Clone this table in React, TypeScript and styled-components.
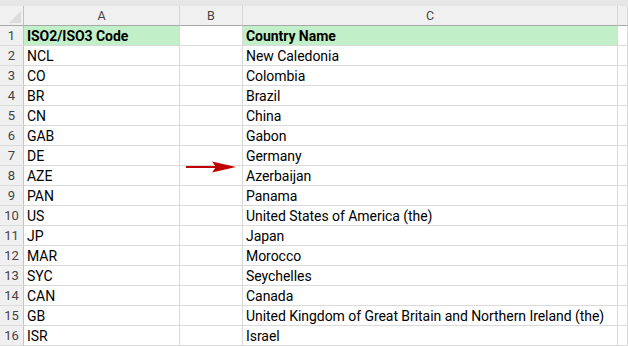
import React from 'react';
import styled, { createGlobalStyle } from 'styled-components';

const rows: [string, string][] = [
  ['NCL', 'New Caledonia'],
  ['CO', 'Colombia'],
  ['BR', 'Brazil'],
  ['CN', 'China'],
  ['GAB', 'Gabon'],
  ['DE', 'Germany'],
  ['AZE', 'Azerbaijan'],
  ['PAN', 'Panama'],
  ['US', 'United States of America (the)'],
  ['JP', 'Japan'],
  ['MAR', 'Morocco'],
  ['SYC', 'Seychelles'],
  ['CAN', 'Canada'],
  ['GB', 'United Kingdom of Great Britain and Northern Ireland (the)'],
  ['ISR', 'Israel'],
];

const GlobalStyle = createGlobalStyle`
  html, body {
    margin: 0;
    padding: 0;
    background: #ffffff;
    overflow: hidden;
  }
  body {
    font-family: Roboto, "Liberation Sans", Arial, sans-serif;
  }
`;

const Page = styled.div`
  width: 628px;
  height: 346px;
  display: flex;
  flex-direction: column;
  overflow: hidden;
`;

const TopBand = styled.div`
  height: 6px;
  background: #e6e6e6;
`;

const Sheet = styled.div`
  position: relative;
  display: grid;
  grid-template-columns: 24px 156px 63px 375px 10px;
  grid-auto-rows: 20px;
`;

const Corner = styled.div`
  position: relative;
  background: #f0f0f0;
  border-right: 1px solid #c4c4c4;
  border-bottom: 1px solid #a8a8a8;

  &::after {
    content: '';
    position: absolute;
    right: 2px;
    bottom: 2px;
    width: 0;
    height: 0;
    border-left: 12px solid transparent;
    border-bottom: 12px solid #dcdcdc;
  }
`;

const ColHead = styled.div`
  background: #f0f0f0;
  border-right: 1px solid #d6d6d6;
  border-bottom: 1px solid #a8a8a8;
  color: #444444;
  font-size: 12.5px;
  line-height: 18px;
  padding-top: 1px;
  text-align: center;
`;

const RowHead = styled.div`
  background: #f0f0f0;
  border-right: 1px solid #c4c4c4;
  border-bottom: 1px solid #dcdcdc;
  color: #444444;
  font-size: 13px;
  line-height: 18px;
  padding-top: 1px;
  text-align: center;
`;

const Cell = styled.div<{ $fill?: boolean; $bold?: boolean }>`
  background: ${p => (p.$fill ? '#c1f0c8' : '#ffffff')};
  border-right: 1px solid #dadada;
  border-bottom: 1px solid #dadada;
  color: #000000;
  font-size: 14px;
  letter-spacing: -0.05px;
  font-weight: ${p => (p.$bold ? 700 : 400)};
  line-height: 18px;
  padding: 1px 0 0 3px;
  white-space: nowrap;
  overflow: visible;
`;

const Arrow = styled.svg`
  position: absolute;
  left: 186px;
  top: 154px;
`;

const App = () => (
  <Page>
    <GlobalStyle />
    <TopBand />
    <Sheet>
      <Corner />
      <ColHead>A</ColHead>
      <ColHead>B</ColHead>
      <ColHead>C</ColHead>
      <ColHead />

      <RowHead>1</RowHead>
      <Cell $fill $bold>ISO2/ISO3 Code</Cell>
      <Cell />
      <Cell $fill $bold>Country Name</Cell>
      <Cell />

      {rows.map(([code, name], i) => (
        <React.Fragment key={code}>
          <RowHead>{i + 2}</RowHead>
          <Cell>{code}</Cell>
          <Cell />
          <Cell>{name}</Cell>
          <Cell />
        </React.Fragment>
      ))}

      <Arrow width="52" height="14" viewBox="0 0 52 14">
        <rect x="0" y="6" width="30" height="2" fill="#c00000" />
        <polygon points="26,1.5 50,7 26,12.5 30,7" fill="#c00000" />
      </Arrow>
    </Sheet>
  </Page>
);

export default App;
